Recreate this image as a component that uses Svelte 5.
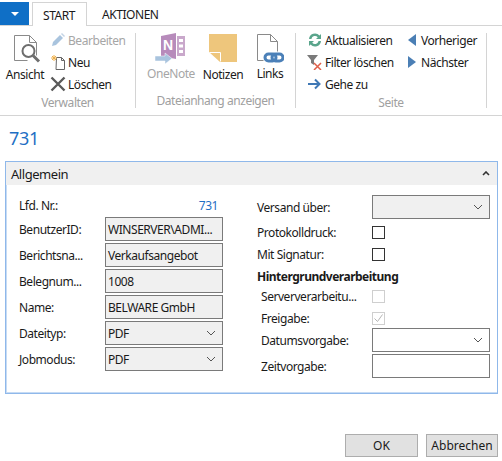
<script>
  const leftFields = [
    { label: 'BenutzerID:', value: 'WINSERVER\\ADMI...' },
    { label: 'Berichtsna...', value: 'Verkaufsangebot' },
    { label: 'Belegnum...', value: '1008' },
    { label: 'Name:', value: 'BELWARE GmbH' },
    { label: 'Dateityp:', value: 'PDF', select: true },
    { label: 'Jobmodus:', value: 'PDF', select: true }
  ];
</script>

{#snippet chevron()}
  <svg class="chev" width="10" height="6" viewBox="0 0 10 6"><path d="M1 1l4 4 4-4" fill="none" stroke="#555" stroke-width="1"/></svg>
{/snippet}

<div class="page">
  <div class="tabbar">
    <div class="appbtn"><span class="caret"></span></div>
    <div class="tab active">START</div>
    <div class="tab">AKTIONEN</div>
  </div>

  <div class="ribbon">
    <section class="group verwalten">
      <div class="tools">
        <div class="big ansicht">
          <svg width="28" height="30" viewBox="0 0 28 30">
            <path d="M1.500 1.500h15l7 7v13M1.500 1.500v25h13M16.500 1.500v7h7" fill="#fff" stroke="#8a8a8a" stroke-width="1"/>
            <circle cx="15.500" cy="17" r="6" fill="#fff" stroke="#6e6e6e" stroke-width="2"/>
            <path d="M20 21.500l6 6" stroke="#6e6e6e" stroke-width="3"/>
          </svg>
          <span>Ansicht</span>
        </div>
        <div class="smalls">
          <div class="small off">
            <svg width="16" height="16" viewBox="0 0 16 16"><path d="M2 14l1-4 7-7 3 3-7 7z" fill="#a9c4de"/><path d="M11 2l1-1 3 3-1 1z" fill="#c3d4e5"/></svg>
            <span>Bearbeiten</span>
          </div>
          <div class="small">
            <svg width="16" height="16" viewBox="0 0 16 16">
              <path d="M6.500 3.500h5l3 3v9h-8.500z" fill="#fff" stroke="#666" stroke-width="1"/>
              <path d="M11.500 3.500v3h3" fill="none" stroke="#666" stroke-width="1"/>
              <path d="M4 1v6M1 4h6M2 2l4 4M6 2l-4 4" stroke="#eeb04c" stroke-width="1"/>
            </svg>
            <span>Neu</span>
          </div>
          <div class="small">
            <svg width="16" height="16" viewBox="0 0 16 16"><path d="M1.500 1.500l13 13M14.500 1.500l-13 13" stroke="#5a5a5a" stroke-width="2.400"/></svg>
            <span>Löschen</span>
          </div>
        </div>
      </div>
      <div class="grouplabel">Verwalten</div>
    </section>

    <section class="group anhang">
      <div class="tools">
        <div class="big off onenote">
          <svg width="32" height="31" viewBox="0 0 32 31">
            <path d="M6 3l15-3v26l-15-3z" fill="#b78bbb"/>
            <path d="M22 3h8v20h-8z" fill="#c9a8cb"/>
            <path d="M24 6h4v3h-4zM24 11.500h4v3h-4zM24 17h4v3h-4z" fill="#fff"/>
            <text x="8" y="17" class="n">N</text>
            <path d="M0 23h10v-3l7 5.500-7 5.500v-3H0z" fill="#a9c4de" stroke="#fff" stroke-width="0.500"/>
          </svg>
          <span>OneNote</span>
        </div>
        <div class="big notizen">
          <svg width="28" height="28" viewBox="0 0 28 28">
            <path d="M0 0h28v28H11L0 18z" fill="#eec67c"/>
            <path d="M0.500 18.500h11v9" fill="none" stroke="#fff" stroke-width="1"/>
          </svg>
          <span>Notizen</span>
        </div>
        <div class="big links">
          <svg width="28" height="30" viewBox="0 0 28 30">
            <path d="M1.500 1.500h13l7 7v10M1.500 1.500v26h6M14.500 1.500v7h7" fill="#fff" stroke="#8a8a8a" stroke-width="1"/>
            <rect x="9" y="21" width="11" height="7" rx="3.500" fill="none" stroke="#4b80b8" stroke-width="3"/>
            <rect x="16" y="21" width="11" height="7" rx="3.500" fill="none" stroke="#4b80b8" stroke-width="3"/>
          </svg>
          <span>Links</span>
        </div>
      </div>
      <div class="grouplabel">Dateianhang anzeigen</div>
    </section>

    <section class="group seite">
      <div class="tools">
        <div class="smalls">
          <div class="small">
            <svg width="16" height="16" viewBox="0 0 16 16">
              <path d="M2 7a6 6 0 0 1 10.500-3.500L14 2v5H9l1.800-1.800A3.700 3.700 0 0 0 4.400 7z" fill="#5aa58c"/>
              <path d="M14 9a6 6 0 0 1-10.500 3.500L2 14V9h5l-1.800 1.800A3.700 3.700 0 0 0 11.600 9z" fill="#5aa58c"/>
            </svg>
            <span>Aktualisieren</span>
          </div>
          <div class="small">
            <svg width="16" height="16" viewBox="0 0 16 16">
              <path d="M0 1h11L7 6v5L4 9V6z" fill="#7a7a7a"/>
              <path d="M7 9l7 7M14 9l-7 7" stroke="#e0604a" stroke-width="1.500"/>
            </svg>
            <span>Filter löschen</span>
          </div>
          <div class="small">
            <svg width="16" height="16" viewBox="0 0 16 16"><path d="M1 8h11M8 3.500L12.500 8 8 12.500" fill="none" stroke="#3f78b5" stroke-width="2"/></svg>
            <span>Gehe zu</span>
          </div>
        </div>
        <div class="smalls nav">
          <div class="small">
            <svg width="10" height="14" viewBox="0 0 10 14"><path d="M9 1v12L1 7z" fill="#4b7fb5"/></svg>
            <span>Vorheriger</span>
          </div>
          <div class="small">
            <svg width="10" height="14" viewBox="0 0 10 14"><path d="M1 1v12l8-6z" fill="#4b7fb5"/></svg>
            <span>Nächster</span>
          </div>
        </div>
      </div>
      <div class="grouplabel">Seite</div>
    </section>
  </div>

  <h1 class="title">731</h1>

  <div class="panel">
    <div class="panelhead">
      <span>Allgemein</span>
      <svg width="8" height="5" viewBox="0 0 8 5"><path d="M1 4l3-3 3 3" fill="none" stroke="#333" stroke-width="1.600"/></svg>
    </div>
    <div class="panelbody">
      <div class="col left">
        <div class="row lfd">
          <label>Lfd. Nr.:</label>
          <span class="readonly">731</span>
        </div>
        {#each leftFields as f}
          <div class="row">
            <label>{f.label}</label>
            <div class="box grey">
              <span>{f.value}</span>
              {#if f.select}{@render chevron()}{/if}
            </div>
          </div>
        {/each}
      </div>

      <div class="col right">
        <div class="row first">
          <label>Versand über:</label>
          <div class="box grey">{@render chevron()}</div>
        </div>
        <div class="row check">
          <label>Protokolldruck:</label>
          <span class="cb"></span>
        </div>
        <div class="row check">
          <label>Mit Signatur:</label>
          <span class="cb"></span>
        </div>
        <div class="heading">Hintergrundverarbeitung</div>
        <div class="row check sub">
          <label>Serververarbeitu...</label>
          <span class="cb dis"></span>
        </div>
        <div class="row check sub">
          <label>Freigabe:</label>
          <span class="cb dis">
            <svg width="11" height="11" viewBox="0 0 11 11"><path d="M1.500 5.500l3 3 5-7" fill="none" stroke="#b5b5b5" stroke-width="1"/></svg>
          </span>
        </div>
        <div class="row sub">
          <label>Datumsvorgabe:</label>
          <div class="box">{@render chevron()}</div>
        </div>
        <div class="row sub">
          <label>Zeitvorgabe:</label>
          <div class="box"></div>
        </div>
      </div>
    </div>
  </div>

  <div class="actions">
    <button class="ok">OK</button>
    <button class="cancel">Abbrechen</button>
  </div>
</div>

<style>
  :global(body) {
    background: #fff;
  }

  .page {
    width: 502px;
    height: 461px;
    overflow: hidden;
    font-family: "Noto Sans", "Open Sans", sans-serif;
    font-size: 12px;
    letter-spacing: -0.45px;
    color: #1a1a1a;
  }

  .tabbar {
    display: flex;
    height: 26px;
    padding-top: 2px;
    box-sizing: border-box;
    border-bottom: 1px solid #d4d4d4;
  }

  .appbtn {
    width: 29px;
    height: 23px;
    margin-right: 3px;
    background: #0f6fc6;
    display: flex;
    align-items: center;
    justify-content: center;
  }

  .caret {
    border-left: 4px solid transparent;
    border-right: 4px solid transparent;
    border-top: 4px solid #fff;
  }

  .tab {
    height: 24px;
    line-height: 25px;
    padding: 0 11px;
    box-sizing: border-box;
  }

  .tab.active {
    width: 55px;
    border: 1px solid #d4d4d4;
    border-bottom: none;
    background: #fff;
    padding: 0 10px;
  }

  .tab:nth-child(3) {
    padding-left: 15px;
  }

  .ribbon {
    display: flex;
    height: 90px;
    box-sizing: border-box;
    border-bottom: 1px solid #d4d4d4;
  }

  .group {
    box-sizing: border-box;
    height: 75px;
    margin-top: 7px;
    border-right: 1px solid #d4d4d4;
    display: flex;
    flex-direction: column;
  }

  .verwalten { width: 136px; }
  .anhang { width: 160px; }
  .seite { width: 191px; }

  .tools {
    display: flex;
    flex: 1;
  }

  .grouplabel {
    text-align: center;
    color: #a0a0a0;
    line-height: 16px;
    height: 16px;
    margin-bottom: -1px;
  }

  .big {
    display: flex;
    flex-direction: column;
    align-items: center;
    height: 59px;
    white-space: nowrap;
  }

  .big svg {
    flex: none;
  }

  .big span {
    margin-top: auto;
    line-height: 18px;
    margin-bottom: 9px;
  }

  .ansicht { width: 50px; padding-top: 1px; }
  .ansicht svg { margin-left: 4px; }
  .onenote { width: 50px; margin-left: 10px; }
  .notizen { width: 44px; margin-left: 5px; padding-top: 1px; }
  .links { width: 40px; margin-left: 5px; }

  .off {
    color: #a6a6a6;
  }

  .smalls {
    display: flex;
    flex-direction: column;
    margin-top: -4px;
    flex: none;
  }

  .small {
    display: flex;
    align-items: center;
    height: 22px;
    gap: 2px;
    white-space: nowrap;
  }

  .small svg {
    flex: none;
  }

  .seite .smalls {
    padding-left: 11px;
    width: 100px;
  }

  .seite .smalls.nav {
    padding-left: 0;
    width: 79px;
  }

  .nav .small {
    gap: 4px;
  }

  .title {
    margin: 11px 0 0 9px;
    height: 34px;
    line-height: 22px;
    font-size: 18px;
    font-weight: 400;
    letter-spacing: -0.3px;
    color: #1f6fc4;
  }

  .panel {
    width: 493px;
    height: 233px;
    margin-left: 5px;
    box-sizing: border-box;
    border: 1px solid #8fb8ea;
    box-shadow: inset 1px 0 #c6dbf4, inset 0 -1px #c6dbf4;
  }

  .panelhead {
    height: 23px;
    background: #f0f0f0;
    display: flex;
    align-items: center;
    justify-content: space-between;
    padding: 0 7px 0 5px;
    font-size: 13px;
  }

  .panelbody {
    display: flex;
    padding-top: 6px;
  }

  .col {
    display: flex;
    flex-direction: column;
  }

  .left {
    width: 238px;
    padding-left: 13px;
    box-sizing: border-box;
    gap: 2px;
  }

  .right {
    padding-top: 4px;
    padding-left: 13px;
  }

  .row {
    display: flex;
    align-items: center;
    height: 24px;
  }

  .lfd {
    padding-top: 5px;
    box-sizing: border-box;
  }

  .row label {
    width: 86px;
    white-space: nowrap;
  }

  .right .row label {
    width: 115px;
  }

  .right .sub label {
    width: 111px;
    margin-left: 4px;
  }

  .check {
    height: 22px;
  }

  .first {
    margin-bottom: 2px;
  }

  .sub:not(.check) {
    margin-bottom: 2px;
  }

  .check + .sub:not(.check) {
    margin-top: -1px;
  }

  .readonly {
    width: 113px;
    text-align: right;
    color: #1f6fc4;
  }

  .box {
    width: 118px;
    height: 24px;
    box-sizing: border-box;
    border: 1px solid #7a7a7a;
    padding: 0 2px;
    display: flex;
    align-items: center;
    justify-content: space-between;
    background: #fff;
    white-space: nowrap;
  }

  .box.grey {
    background: #f0f0f0;
  }

  .chev {
    margin-left: auto;
    margin-right: 4px;
  }

  .cb {
    width: 13px;
    height: 13px;
    box-sizing: border-box;
    border: 1px solid #333;
    display: flex;
    align-items: center;
    justify-content: center;
  }

  .cb.dis {
    border-color: #cfcfcf;
  }

  .heading {
    height: 20px;
    line-height: 23px;
    font-weight: 700;
    letter-spacing: -0.5px;
  }

  .actions {
    display: flex;
    margin-top: 40px;
  }

  .actions button {
    height: 23px;
    box-sizing: border-box;
    border: 1px solid #adadad;
    background: #e1e1e1;
    font: inherit;
    color: inherit;
    padding: 0;
  }

  .ok {
    width: 73px;
    margin-left: 345px;
  }

  .cancel {
    width: 72px;
    margin-left: 8px;
  }

  .n {
    font-family: "Liberation Sans", sans-serif;
    font-weight: 700;
    font-size: 14px;
    fill: #fff;
  }
</style>
